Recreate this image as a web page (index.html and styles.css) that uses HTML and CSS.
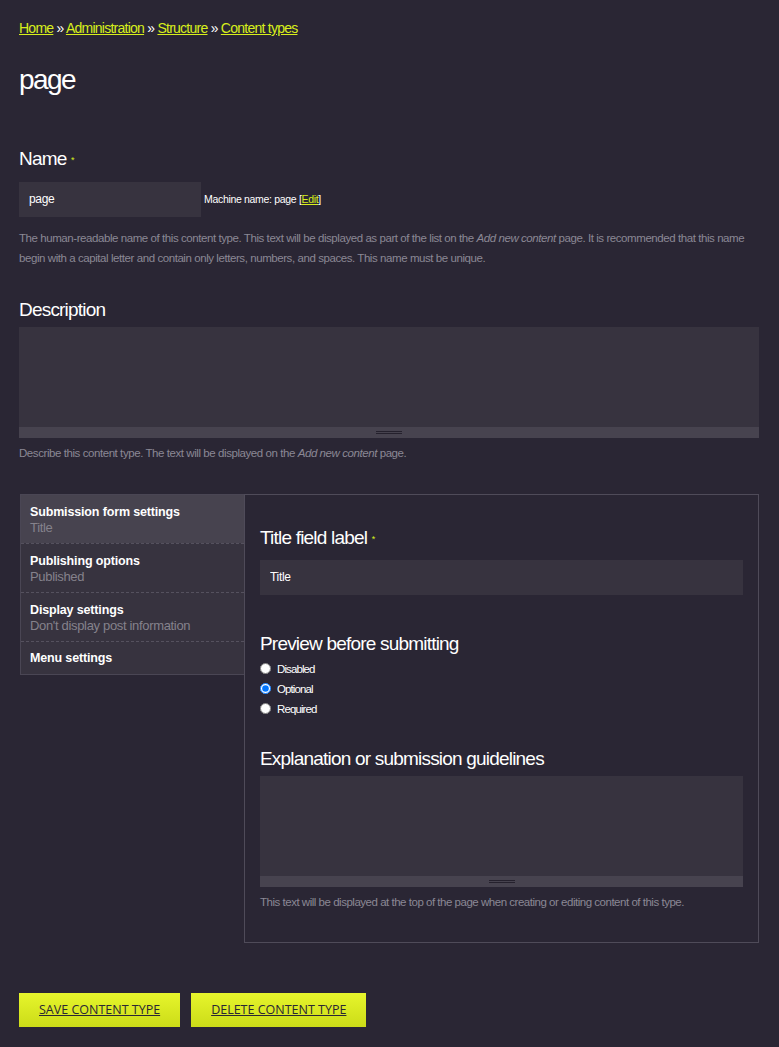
FILE: index.html
```html
<!DOCTYPE html>
<html lang="en">
<head>
<meta charset="utf-8"/>
<title>page | Content types</title>
<link rel="stylesheet" href="styles.css">
</head>
<body>
<div class="page">
  <div class="breadcrumb">
    <a href="#">Home</a> » <a href="#">Administration</a> » <a href="#">Structure</a> » <a href="#">Content types</a>
  </div>
  <h1 class="title">page</h1>

  <form class="type-form">
    <div class="form-item">
      <label class="label">Name <span class="req">*</span></label>
      <div class="name-row">
        <input class="text" type="text" value="page"/>
        <span class="machine">Machine name: page [<a href="#">Edit</a>]</span>
      </div>
      <div class="desc">The human-readable name of this content type. This text will be displayed as part of the list on the <em>Add new content</em> page. It is recommended that this name begin with a capital letter and contain only letters, numbers, and spaces. This name must be unique.</div>
    </div>

    <div class="form-item">
      <label class="label tight">Description</label>
      <div class="textarea-wrap">
        <textarea></textarea>
        <div class="grippie"><span></span></div>
      </div>
      <div class="desc">Describe this content type. The text will be displayed on the <em>Add new content</em> page.</div>
    </div>

    <div class="vtabs">
      <ul class="vtabs-list">
        <li class="vtab selected"><strong>Submission form settings</strong><span>Title</span></li>
        <li class="vtab"><strong>Publishing options</strong><span>Published</span></li>
        <li class="vtab"><strong>Display settings</strong><span>Don't display post information</span></li>
        <li class="vtab"><strong>Menu settings</strong></li>
      </ul>
      <div class="vtabs-panel">
        <div class="form-item">
          <label class="label">Title field label <span class="req">*</span></label>
          <input class="text wide" type="text" value="Title"/>
        </div>
        <div class="form-item preview">
          <label class="label">Preview before submitting</label>
          <div class="radios">
            <label><input type="radio" name="preview"/> Disabled</label>
            <label><input type="radio" name="preview" checked/> Optional</label>
            <label><input type="radio" name="preview"/> Required</label>
          </div>
        </div>
        <div class="form-item">
          <label class="label tight">Explanation or submission guidelines</label>
          <div class="textarea-wrap">
            <textarea></textarea>
            <div class="grippie"><span></span></div>
          </div>
          <div class="desc">This text will be displayed at the top of the page when creating or editing content of this type.</div>
        </div>
      </div>
    </div>

    <div class="actions">
      <button type="button" class="btn">Save content type</button>
      <button type="button" class="btn">Delete content type</button>
    </div>
  </form>
</div>
</body>
</html>
```

FILE: styles.css
```css
body {
    margin: 0;
    background-color: #2a2634;
    color: #fff;
    font-family: "Liberation Sans", Arial, sans-serif;
}
.page {
    padding: 19px 20px 20px 19px;
}
a {
    color: #d8ef1b;
}
.breadcrumb {
    font-size: 14px;
    line-height: 18px;
    letter-spacing: -0.75px;
    color: #fff;
}
.title {
    margin: 27px 0 0;
    font-size: 28px;
    font-weight: normal;
    line-height: 32px;
    letter-spacing: -1.6px;
}
.type-form {
    margin-top: 51px;
}
.form-item {
    margin-bottom: 30px;
}
.label {
    display: block;
    font-size: 19px;
    line-height: 24px;
    letter-spacing: -0.8px;
    margin-bottom: 10px;
}
.label.tight {
    margin-bottom: 5px;
}
.req {
    color: #d8ef1b;
    font-size: 9px;
    vertical-align: middle;
    letter-spacing: 0;
}
.name-row {
    display: flex;
    align-items: center;
}
input.text {
    box-sizing: border-box;
    width: 182px;
    height: 35px;
    padding: 0 10px;
    border: 0;
    background-color: #37333f;
    color: #fff;
    font-family: "Liberation Sans", Arial, sans-serif;
    font-size: 12px;
    letter-spacing: -0.3px;
}
input.text.wide {
    width: 100%;
}
.machine {
    margin-left: 3px;
    font-size: 10.5px;
    letter-spacing: -0.32px;
}
.desc {
    margin-top: 11px;
    font-size: 11.5px;
    line-height: 20px;
    letter-spacing: -0.43px;
    color: #8b8894;
}
.textarea-wrap {
    display: flex;
    flex-direction: column;
}
textarea {
    box-sizing: border-box;
    height: 100px;
    border: 0;
    background-color: #37333f;
    resize: none;
    display: block;
}
.grippie {
    height: 11px;
    background-color: #47434f;
    display: flex;
    justify-content: center;
    align-items: center;
}
.grippie span {
    width: 26px;
    height: 1px;
    border-top: 1px solid #25212d;
    border-bottom: 1px solid #25212d;
}
.textarea-wrap + .desc {
    margin-top: 5px;
}

/* vertical tabs */
.vtabs {
    display: flex;
    align-items: flex-start;
    margin-top: 31px;
}
.vtabs-list {
    list-style: none;
    margin: 0 0 0 1px;
    padding: 0;
    width: 223px;
    border: 1px solid #4a4654;
    border-right: 0;
    background-color: #37333f;
}
.vtab {
    box-sizing: border-box;
    height: 49px;
    padding: 9px 10px 0 9px;
    border-top: 1px dashed #55515e;
    font-size: 12.5px;
    line-height: 16px;
    letter-spacing: -0.15px;
}
.vtab:first-child {
    border-top: 0;
    height: 48px;
}
.vtab:last-child {
    height: 33px;
    padding-top: 8px;
}
.vtab.selected {
    background-color: #47434f;
}
.vtab strong {
    display: block;
}
.vtab span {
    display: block;
    color: #85828c;
    font-size: 13px;
    letter-spacing: -0.33px;
}
.vtabs-panel {
    flex: 1;
    box-sizing: border-box;
    padding: 31px 15px 30px 15px;
    border: 1px solid #4f4b59;
}
.vtabs-panel .form-item:last-child {
    margin-bottom: 0;
}
.vtabs-panel .form-item:first-child .label {
    margin-bottom: 9px;
}
.vtabs-panel .preview {
    margin-top: 37px;
    margin-bottom: 28px;
}
.vtabs-panel .preview .label {
    margin-bottom: 3px;
}
.vtabs-panel .desc {
    letter-spacing: -0.48px;
}
.radios label {
    display: flex;
    align-items: center;
    height: 20px;
    font-size: 11.5px;
    letter-spacing: -0.9px;
}
.radios input {
    margin: 0 6px 0 0;
    width: 11px;
    height: 11px;
}

.actions {
    display: flex;
    gap: 11px;
    margin-top: 50px;
}
.btn {
    height: 34px;
    padding: 0 20px;
    border: 0;
    background: linear-gradient(#e6f52c, #ccdc18);
    color: #2a2634;
    font-family: "Open Sans", sans-serif;
    font-size: 12.5px;
    text-transform: uppercase;
    text-decoration: underline;
    cursor: pointer;
}
```
